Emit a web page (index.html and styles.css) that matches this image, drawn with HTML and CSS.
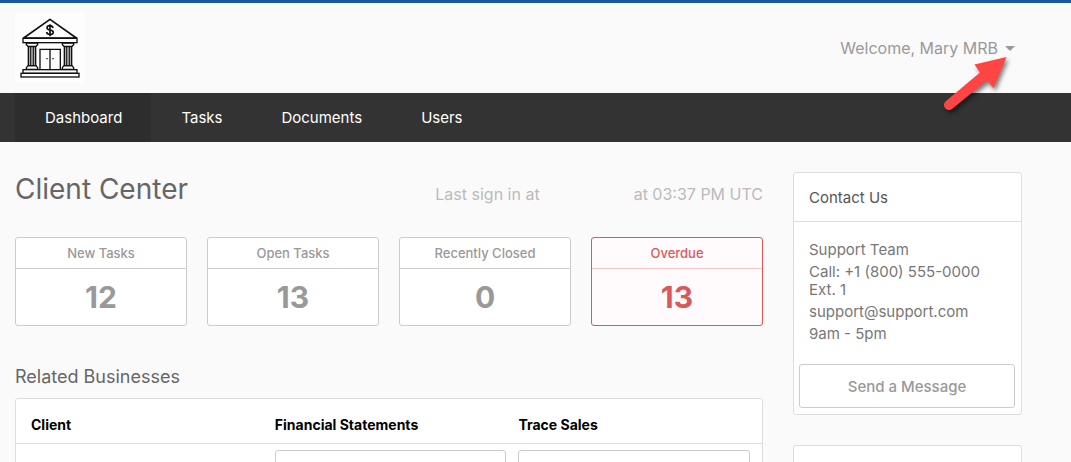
FILE: index.html
```
<!DOCTYPE html>
<html lang="en">
<head>
  <meta charset="UTF-8">
  <meta name="viewport" content="width=device-width, initial-scale=1">
  <title>Client Center</title>
  <link rel="stylesheet" href="styles.css">
</head>
<body>
  <header class="header">
    <a href="#" class="logo" aria-label="Home">
      <svg viewBox="0 0 210 210" width="70" height="70" fill="none" stroke="#111" stroke-width="4">
        <path d="M105 19 L26 75 H184 Z" stroke-width="5" stroke-linejoin="round"/>
        <rect x="24" y="76" width="162" height="13"/>
        <path d="M34 90 H68 V95 L63 100 H39 L34 95 Z M142 90 H176 V95 L171 100 H147 L142 95 Z"/>
        <path d="M40 101 H62 V158 H40 Z M148 101 H170 V158 H148 Z" fill="#aaa"/>
        <path d="M47 101 V158 M55 101 V158 M155 101 V158 M163 101 V158" stroke-width="3"/>
        <path d="M39 158 H63 L68 164 V169 H34 V164 Z M147 158 H171 L176 164 V169 H142 V164 Z"/>
        <path d="M75 169 V109 H136 V169 M105 109 V169"/>
        <path d="M94 137 H98 M112 137 H116"/>
        <rect x="24" y="170" width="162" height="11"/>
        <rect x="18" y="181" width="174" height="11"/>
        <path d="M114 45 C112 35 96 36 96 44 C96 54 115 48 115 58 C115 67 96 67 95 57 M105 34 V70" stroke-width="5"/>
      </svg>
    </a>
    <button type="button" class="user-menu">Welcome, Mary MRB <span class="caret"></span></button>
    <svg class="pointer" viewBox="0 0 80 70" width="80" height="70">
      <path d="M66.500 7 L34.500 14.500 L40 22.500 L6 51 A5 5 0 0 0 12 59 L47 30.500 L53.500 38 Z" fill="#ff4444"/>
    </svg>
  </header>

  <nav class="nav">
    <a href="#" class="active">Dashboard</a>
    <a href="#">Tasks</a>
    <a href="#">Documents</a>
    <a href="#">Users</a>
  </nav>

  <div class="container">
    <main>
      <div class="title-row">
        <h1>Client Center</h1>
        <p class="sign-in"><span>Last sign in at</span><span>at 03:37 PM UTC</span></p>
      </div>

      <div class="stats">
        <a href="#" class="stat">
          <span class="stat-label">New Tasks</span>
          <span class="stat-value">12</span>
        </a>
        <a href="#" class="stat">
          <span class="stat-label">Open Tasks</span>
          <span class="stat-value">13</span>
        </a>
        <a href="#" class="stat">
          <span class="stat-label">Recently Closed</span>
          <span class="stat-value">0</span>
        </a>
        <a href="#" class="stat overdue">
          <span class="stat-label">Overdue</span>
          <span class="stat-value">13</span>
        </a>
      </div>

      <h2>Related Businesses</h2>
      <div class="panel table-panel">
        <table>
          <thead>
            <tr>
              <th>Client</th>
              <th>Financial Statements</th>
              <th>Trace Sales</th>
            </tr>
          </thead>
          <tbody>
            <tr>
              <td></td>
              <td><button type="button" class="btn" aria-label="Financial statements"></button></td>
              <td><button type="button" class="btn" aria-label="Trace sales"></button></td>
            </tr>
          </tbody>
        </table>
      </div>
    </main>

    <aside>
      <section class="panel">
        <h3>Contact Us</h3>
        <div class="contact">
          <p>Support Team</p>
          <p>Call: +1 (800) 555-0000 Ext. 1</p>
          <p>support@support.com</p>
          <p>9am - 5pm</p>
        </div>
        <div class="panel-footer">
          <button type="button" class="btn">Send a Message</button>
        </div>
      </section>
      <section class="panel empty"></section>
    </aside>
  </div>
</body>
</html>
```
FILE: styles.css
```
* {
  box-sizing: border-box;
}

body {
  margin: 0;
  border-top: 3px solid #1a55a0;
  background-color: #fafafa;
  color: #777;
  font-family: Inter, "Liberation Sans", sans-serif;
  font-size: 15px;
}

h1, h2, h3, p {
  margin: 0;
}

a {
  text-decoration: none;
}

button {
  font-family: inherit;
  cursor: pointer;
}

.header {
  position: relative;
  display: flex;
  justify-content: space-between;
  align-items: center;
  height: 90px;
  padding: 0 56px 0 15px;
}

.logo {
  background-color: #fdfdfd;
}

.logo svg {
  display: block;
}

.user-menu {
  display: flex;
  align-items: center;
  gap: 7px;
  padding: 0;
  border: none;
  background: none;
  color: #999;
  font-size: 16px;
}

.caret {
  border-top: 5px solid #999;
  border-left: 5px solid transparent;
  border-right: 5px solid transparent;
}

/* arrow over the header and nav */
.pointer {
  position: absolute;
  top: 47px;
  right: 51px;
  filter: drop-shadow(2px 3px 2px rgba(0, 0, 0, 0.5));
}

.nav {
  display: flex;
  padding: 0 15px;
  background-color: #333;
}

.nav a {
  padding: 0 29px 0 30px;
  color: #fff;
  line-height: 49px;
}

.nav .active {
  background-color: #2d2d2d;
}

.container {
  display: grid;
  grid-template-columns: minmax(0, 1fr) 229px;
  gap: 30px;
  padding: 30px 49px 0 15px;
}

.title-row {
  display: flex;
  justify-content: space-between;
  align-items: flex-end;
  margin-bottom: 30px;
}

h1 {
  color: #666;
  font-size: 28px;
  font-weight: 400;
  line-height: 35px;
}

.sign-in {
  display: flex;
  gap: 94px;
  color: #bbb;
  font-size: 16px;
  line-height: 26px;
}

.stats {
  display: grid;
  grid-template-columns: repeat(4, 1fr);
  gap: 20px;
  margin-bottom: 38px;
}

.stat {
  border: 1px solid #ccc;
  border-radius: 3px;
  background-color: #fff;
  color: #999;
  text-align: center;
}

.stat-label {
  display: block;
  border-bottom: 1px solid #ccc;
  font-size: 13px;
  font-weight: 500;
  line-height: 30px;
}

.stat-value {
  display: block;
  font-size: 30px;
  font-weight: 700;
  line-height: 56px;
}

.overdue {
  border-color: #d9595b;
  background-color: #fffafc;
  color: #d9595b;
}

.overdue .stat-label {
  border-color: #f7c6c7;
}

h2 {
  margin-bottom: 8px;
  color: #666;
  font-size: 18px;
  font-weight: 400;
  line-height: 26px;
}

.panel {
  border: 1px solid #ddd;
  border-radius: 3px;
  background-color: #fff;
}

.table-panel {
  padding-top: 8px;
}

table {
  width: 100%;
  border-collapse: collapse;
  table-layout: fixed;
}

th {
  height: 36px;
  padding: 0;
  border-bottom: 1px solid #ddd;
  color: #000;
  font-size: 14px;
  font-weight: 700;
  text-align: left;
}

th:first-child {
  width: 34.7%;
  padding-left: 15px;
}

td {
  padding: 6px 12px 6px 0;
}

.btn {
  display: block;
  width: 100%;
  height: 44px;
  border: 1px solid #ccc;
  border-radius: 3px;
  background-color: #fff;
  color: #999;
  font-size: 15px;
  font-weight: 500;
}

aside {
  display: flex;
  flex-direction: column;
  gap: 30px;
}

h3 {
  padding: 2px 15px 0;
  border-bottom: 1px solid #ddd;
  color: #555;
  font-size: 15px;
  font-weight: 400;
  line-height: 46px;
}

.contact {
  display: grid;
  gap: 4px;
  padding: 19px 15px 21px;
  line-height: 18px;
}

.panel-footer {
  padding: 0 6px 6px 5px;
}

.empty {
  height: 60px;
}
```
